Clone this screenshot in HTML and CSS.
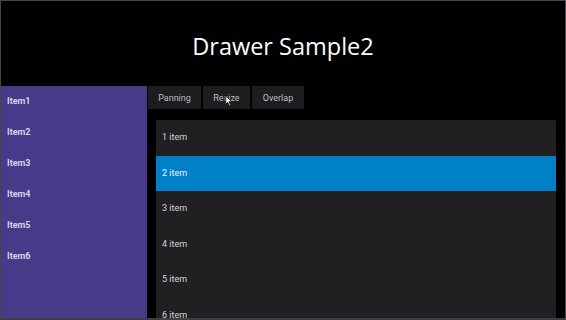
FILE: index.html
```html
<!DOCTYPE html>
<html>
<head>
<meta charset="utf-8">
<link rel="stylesheet" href="styles.css">
</head>
<body>
<div class="frame">
  <header class="header"><h1 class="title">Drawer Sample2</h1></header>
  <div class="main">
    <nav class="drawer">
      <div class="ditem">Item1</div>
      <div class="ditem">Item2</div>
      <div class="ditem">Item3</div>
      <div class="ditem">Item4</div>
      <div class="ditem">Item5</div>
      <div class="ditem">Item6</div>
    </nav>
    <section class="content">
      <div class="tabs">
        <div class="tab tab-pan">Panning</div>
        <div class="tab tab-res">Resize<svg class="cursor" viewBox="0 0 10 14" width="8" height="12"><path d="M1 1 L1 11 L3.5 8.5 L5.5 13 L7 12.3 L5 7.8 L8.5 7.8 Z" fill="#fff" stroke="#000" stroke-width="0.8"/></svg></div>
        <div class="tab tab-ovl">Overlap</div>
      </div>
      <div class="list">
        <div class="row">1 item</div>
        <div class="row selected">2 item</div>
        <div class="row">3 item</div>
        <div class="row">4 item</div>
        <div class="row">5 item</div>
        <div class="row">6 item</div>
      </div>
    </section>
  </div>
</div>
</body>
</html>
```
FILE: styles.css
```css
html, body {
  margin: 0;
  padding: 0;
  background: #000;
  width: 566px;
  height: 320px;
  overflow: hidden;
  font-family: Roboto, "Noto Sans", sans-serif;
}
.frame {
  box-sizing: border-box;
  width: 566px;
  height: 320px;
  border: 1px solid #45444d;
  border-bottom: 2px solid #3e3d44;
  display: flex;
  flex-direction: column;
  overflow: hidden;
}
.header {
  height: 85px;
  flex: none;
  display: flex;
  align-items: center;
  justify-content: center;
}
.title {
  margin: 0;
  padding-top: 5px;
  font-family: "Open Sans", "Noto Sans", sans-serif;
  font-weight: 400;
  font-size: 23.5px;
  color: #fff;
}
.main {
  flex: 1;
  display: flex;
  min-height: 0;
}
.drawer {
  width: 146px;
  flex: none;
  background: #463a89;
}
.ditem {
  height: 31px;
  line-height: 31px;
  padding-left: 6px;
  font-size: 9px;
  font-weight: 700;
  color: #d6d2e8;
}
.content {
  flex: 1;
  display: flex;
  flex-direction: column;
  min-width: 0;
}
.tabs {
  display: flex;
  gap: 2px;
  margin-left: 1px;
  height: 23px;
  flex: none;
}
.tab {
  position: relative;
  display: flex;
  align-items: center;
  justify-content: center;
  background: #1e1c1f;
  color: #bdbcc0;
  font-size: 9px;
}
.tab-pan { width: 53px; }
.tab-res { width: 47px; }
.tab-ovl { width: 52px; }
.cursor {
  position: absolute;
  left: 22px;
  top: 9px;
}
.list {
  margin: 11px 9px 0 9px;
  background: #211f22;
  flex: 1;
  overflow: hidden;
}
.row {
  height: 35.5px;
  box-sizing: border-box;
  border-bottom: 1px solid #262428;
  display: flex;
  align-items: center;
  padding-left: 6px;
  font-size: 9px;
  color: #d6d5d8;
}
.row.selected {
  background: #0080c6;
  color: #e8f2fa;
  border-bottom-color: #0080c6;
}
```
